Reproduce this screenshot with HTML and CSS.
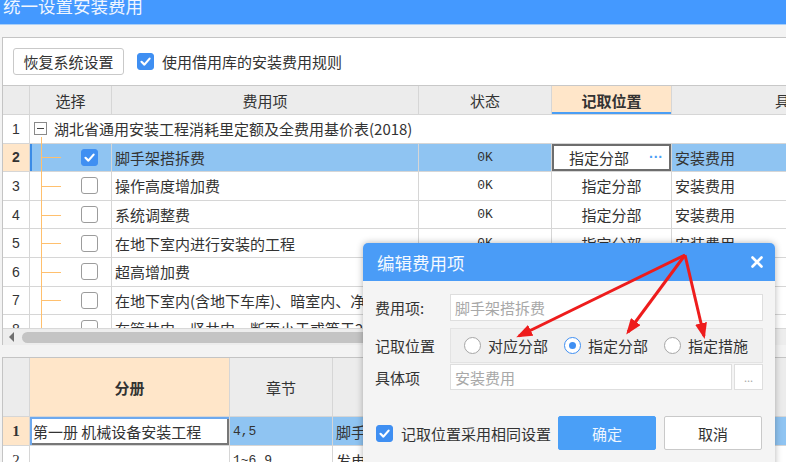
FILE: index.html
```html
<!DOCTYPE html>
<html lang="zh">
<head>
<meta charset="utf-8">
<title>统一设置安装费用</title>
<link rel="stylesheet" href="styles.css">
</head>
<body>
<div class="window">
  <div class="titlebar"><span class="title">统一设置安装费用</span></div>
  <div class="strip"></div>
  <div class="panel">
    <div class="toolbar">
      <button class="btn">恢复系统设置</button>
      <span class="cb cb-on"><svg viewBox="0 0 17 17" width="17" height="17"><path d="M4.5 8.8 L7.4 11.6 L12.6 5.6" fill="none" stroke="#fff" stroke-width="2.2" stroke-linecap="round" stroke-linejoin="round"/></svg></span>
      <span class="cb-text">使用借用库的安装费用规则</span>
    </div>
    <div class="grid-view">
      <div class="grid upper">
        <div class="c hd num"></div>
        <div class="c hd">选择</div>
        <div class="c hd">费用项</div>
        <div class="c hd">状态</div>
        <div class="c hd hd-active">记取位置</div>
        <div class="c hd hd-last">具体项</div>

        <div class="c num">1</div>
        <div class="c root"><span class="tree-box"></span><span>湖北省通用安装工程消耗里定额及全费用基价表(2018)</span></div>

        <div class="c num num-sel">2</div>
        <div class="c sel selrow"><span class="cb cb-on"><svg viewBox="0 0 17 17" width="17" height="17"><path d="M4.5 8.8 L7.4 11.6 L12.6 5.6" fill="none" stroke="#fff" stroke-width="2.2" stroke-linecap="round" stroke-linejoin="round"/></svg></span></div>
        <div class="c name selrow">脚手架搭拆费</div>
        <div class="c stat selrow">0K</div>
        <div class="c pos edit"><span>指定分部</span><span class="dots">···</span></div>
        <div class="c item selrow">安装费用</div>

        <div class="c num">3</div>
        <div class="c sel"><span class="cb"></span></div>
        <div class="c name">操作高度增加费</div>
        <div class="c stat">0K</div>
        <div class="c pos">指定分部</div>
        <div class="c item">安装费用</div>

        <div class="c num">4</div>
        <div class="c sel"><span class="cb"></span></div>
        <div class="c name">系统调整费</div>
        <div class="c stat">0K</div>
        <div class="c pos">指定分部</div>
        <div class="c item">安装费用</div>

        <div class="c num">5</div>
        <div class="c sel"><span class="cb"></span></div>
        <div class="c name">在地下室内进行安装的工程</div>
        <div class="c stat">0K</div>
        <div class="c pos">指定分部</div>
        <div class="c item">安装费用</div>

        <div class="c num">6</div>
        <div class="c sel"><span class="cb"></span></div>
        <div class="c name">超高增加费</div>
        <div class="c stat">0K</div>
        <div class="c pos">指定分部</div>
        <div class="c item">安装费用</div>

        <div class="c num">7</div>
        <div class="c sel"><span class="cb"></span></div>
        <div class="c name">在地下室内(含地下车库)、暗室内、净高小于1.6m楼层</div>
        <div class="c stat">0K</div>
        <div class="c pos">指定分部</div>
        <div class="c item">安装费用</div>

        <div class="c num">8</div>
        <div class="c sel"><span class="cb"></span></div>
        <div class="c name">在管井内、竖井内、断面小于或等于2平方米隧道</div>
        <div class="c stat">0K</div>
        <div class="c pos">指定分部</div>
        <div class="c item">安装费用</div>
      </div>
    </div>
    <div class="hscroll"><span class="arrow-left"></span><span class="thumb"></span></div>
  </div>

  <div class="lower-wrap">
    <div class="grid lower">
      <div class="c hd num"></div>
      <div class="c hd hd-peach">分册</div>
      <div class="c hd">章节</div>
      <div class="c hd">清单</div>

      <div class="c num num-sel lnum">1</div>
      <div class="c book edit-blue">第一册 机械设备安装工程</div>
      <div class="c chap selrow">4,5</div>
      <div class="c desc selrow">脚手架搭拆费</div>

      <div class="c num lnum">2</div>
      <div class="c book"></div>
      <div class="c chap">1~6,9</div>
      <div class="c desc">发电机组安装</div>
    </div>
  </div>
</div>

<div class="dialog">
  <div class="dlg-title">
    <span>编辑费用项</span>
    <svg class="close" viewBox="0 0 12 12" width="12" height="12"><path d="M1.5 1.5 L10.5 10.5 M10.5 1.5 L1.5 10.5" stroke="#fff" stroke-width="2.6" stroke-linecap="round"/></svg>
  </div>
  <div class="dlg-body">
    <div class="frow frow-name">
      <span class="lbl">费用项:</span>
      <div class="input"><span class="ph">脚手架搭拆费</span></div>
    </div>
    <div class="frow frow-pos">
      <span class="lbl">记取位置</span>
      <div class="radio-group">
        <span class="radio-item"><span class="radio"></span>对应分部</span>
        <span class="radio-item"><span class="radio radio-on"></span>指定分部</span>
        <span class="radio-item"><span class="radio"></span>指定措施</span>
      </div>
    </div>
    <div class="frow frow-item">
      <span class="lbl">具体项</span>
      <div class="input input-short"><span class="ph">安装费用</span></div>
      <div class="more">...</div>
    </div>
    <div class="dlg-foot">
      <span class="cb cb-on"><svg viewBox="0 0 17 17" width="17" height="17"><path d="M4.5 8.8 L7.4 11.6 L12.6 5.6" fill="none" stroke="#fff" stroke-width="2.2" stroke-linecap="round" stroke-linejoin="round"/></svg></span>
      <span class="cb-text">记取位置采用相同设置</span>
      <div class="btns">
        <button class="dbtn primary">确定</button>
        <button class="dbtn">取消</button>
      </div>
    </div>
  </div>
</div>

<svg class="arrows" viewBox="0 0 786 462" width="786" height="462">
  <defs>
    <marker id="ah" markerUnits="userSpaceOnUse" markerWidth="16" markerHeight="12" refX="13" refY="6" orient="auto">
      <path d="M0 0 L16 6 L0 12 Z" fill="#ee1c1c"/>
    </marker>
  </defs>
  <g stroke="#ee1c1c" stroke-width="3" fill="none">
    <line x1="685" y1="255" x2="519" y2="336" marker-end="url(#ah)"/>
    <line x1="685" y1="255" x2="628" y2="332" marker-end="url(#ah)"/>
    <line x1="685" y1="255" x2="704" y2="336" marker-end="url(#ah)"/>
  </g>
</svg>
</body>
</html>
```

FILE: styles.css
```css
* { box-sizing: border-box; }

html, body {
  margin: 0;
  padding: 0;
}

body {
  width: 786px;
  height: 462px;
  overflow: hidden;
  position: relative;
  background: #f3f3f3;
  font-family: "Noto Sans CJK SC", "Noto Sans", sans-serif;
  font-size: 15px;
  color: #333;
}

.window {
  width: 786px;
  height: 462px;
  overflow: hidden;
}

.titlebar {
  height: 25px;
  background: #4499ff;
  border-bottom: 1px solid #a9cff8;
  overflow: hidden;
}

.title {
  display: block;
  color: #f0f6ff;
  font-size: 17.5px;
  line-height: 17px;
  margin-top: -3px;
  padding-left: 3px;
  white-space: nowrap;
}

.strip {
  height: 12px;
  background: #f3f3f3;
}

.panel {
  margin-left: 2px;
  border-top: 1px solid #c4c4c4;
  border-left: 1px solid #c4c4c4;
  background: #fff;
}

.toolbar {
  height: 48px;
  display: flex;
  align-items: center;
  padding-left: 10px;
  border-bottom: 1px solid #c8c8c8;
}

.btn {
  height: 27px;
  width: 111px;
  background: #fff;
  border: 1px solid #c9c9c9;
  border-radius: 3px;
  font-family: inherit;
  font-size: 15px;
  color: #333;
  padding: 0;
  margin-right: 13px;
}

.cb {
  width: 17px;
  height: 17px;
  border: 1px solid #9c9c9c;
  border-radius: 3px;
  background: #fff;
  display: inline-flex;
  flex: none;
  overflow: hidden;
}

.cb svg { display: block; margin: -1px; }

.cb-on {
  background: #3f8ff2;
  border-color: #3f8ff2;
}

.cb-text {
  margin-left: 8px;
  white-space: nowrap;
}

/* grids */
.grid-view {
  height: 242px;
  overflow: hidden;
}

.grid {
  display: grid;
}

.upper {
  grid-template-columns: 27px 82px 307px 133px 120px 300px;
  grid-template-rows: 29px;
  grid-auto-rows: 28.6px;
}

.c {
  border-right: 1px solid #d6d6d6;
  border-bottom: 1px solid #d6d6d6;
  display: flex;
  align-items: center;
  white-space: nowrap;
  overflow: hidden;
  background: #fff;
  position: relative;
}

.hd {
  background: #ececec;
  justify-content: center;
  color: #333;
}

.hd-active {
  background: #ffe6c9;
  font-weight: bold;
  box-shadow: inset 0 -2px 0 #4a9ef5;
}

.hd-last {
  justify-content: flex-start;
  padding-left: 103px;
}

.num {
  justify-content: center;
  font-family: "Liberation Sans", sans-serif;
  font-size: 14px;
}

.num.hd { background: #ececec; }

.num-sel {
  background: #ffe6c9;
  font-weight: bold;
}

.root {
  grid-column: 2 / -1;
  padding-left: 4px;
  overflow: visible;
}

.tree-box {
  width: 13px;
  height: 13px;
  border: 1px solid #8a8a8a;
  margin-right: 7px;
  position: relative;
  flex: none;
}

.tree-box::after {
  content: "";
  position: absolute;
  left: 2px;
  right: 2px;
  top: 5px;
  height: 1px;
  background: #444;
}

.root::before {
  content: "";
  position: absolute;
  left: 11px;
  top: 22px;
  bottom: -1px;
  width: 1px;
  background: #ffc06e;
}

.sel {
  padding-left: 51px;
  overflow: visible;
}

.sel::before {
  content: "";
  position: absolute;
  left: 11px;
  top: 0;
  bottom: -1px;
  width: 1px;
  background: #ffc06e;
}

.sel::after {
  content: "";
  position: absolute;
  left: 11px;
  width: 20px;
  top: 50%;
  height: 1px;
  background: #ffc06e;
}

.name { padding-left: 3px; }

.stat {
  justify-content: center;
  font-family: "Liberation Mono", monospace;
  font-size: 13px;
}

.pos { justify-content: center; }

.item { padding-left: 3px; }

.selrow { background: #8fc4f2; }

.sel.selrow { box-shadow: inset 2px 0 0 #3b8be6; }

.edit {
  background: #fff;
  box-shadow: inset 0 0 0 2px #6d6d6d;
  justify-content: space-between;
  padding: 0 8px 0 17px;
}

.dots {
  color: #4a9ef5;
  font-family: "Liberation Sans", sans-serif;
  font-size: 14px;
  font-weight: bold;
  letter-spacing: 0;
}

.hscroll {
  height: 17px;
  background: #ededed;
  border-top: 1px solid #d8d8d8;
  display: flex;
  align-items: center;
  padding-left: 6px;
}

.arrow-left {
  width: 0;
  height: 0;
  border-top: 5px solid transparent;
  border-bottom: 5px solid transparent;
  border-right: 5px solid #6f6f6f;
  margin-right: 8px;
}

.thumb {
  height: 11px;
  width: 740px;
  border-radius: 6px;
  background: #c4c4c4;
}

.lower-wrap {
  margin-top: 12px;
  margin-left: 2px;
  border-top: 1px solid #c4c4c4;
  border-left: 1px solid #c4c4c4;
  background: #fff;
}

.lower {
  grid-template-columns: 27px 200px 103px 460px;
  grid-template-rows: 59px 29px 29px;
}

.hd-peach {
  background: #ffe6c9;
  font-weight: bold;
}

.lnum {
  font-family: "Liberation Serif", serif;
  font-size: 15px;
}

.book { padding-left: 3px; }

.edit-blue {
  box-shadow: inset 2px 2px 0 #6ea9ee, inset -2px -2px 0 #777;
}

.chap {
  padding-left: 3px;
  font-family: "Liberation Mono", monospace;
  font-size: 13px;
}

.desc { padding-left: 3px; }

/* dialog */
.dialog {
  position: absolute;
  left: 363px;
  top: 243px;
  width: 412px;
  height: 240px;
  background: #f4f4f4;
  border-radius: 5px 5px 0 0;
  box-shadow: 0 0 7px rgba(0, 0, 0, 0.3);
  overflow: hidden;
}

.dlg-title {
  height: 38px;
  background: #4a9cf7;
  color: #f4f9ff;
  font-size: 17.5px;
  display: flex;
  align-items: center;
  justify-content: space-between;
  padding: 0 12px 0 14px;
}

.dlg-body {
  padding: 13px 12px 0 12px;
}

.frow {
  display: flex;
  align-items: center;
}

.frow-name { height: 27px; }
.frow-pos { height: 35px; margin-top: 7px; }
.frow-item { height: 26px; margin-top: 1px; }

.lbl {
  width: 75px;
  flex: none;
  white-space: nowrap;
}

.input {
  height: 27px;
  width: 313px;
  background: #fff;
  border: 1px solid #dedede;
  display: flex;
  align-items: center;
  padding-left: 4px;
}

.ph { color: #a8a8a8; }

.radio-group {
  width: 313px;
  height: 35px;
  background: #f0f0f0;
  border: 1px solid #e3e3e3;
  display: flex;
  align-items: center;
  padding-left: 13px;
  gap: 16px;
}

.radio-item {
  display: inline-flex;
  align-items: center;
  white-space: nowrap;
}

.radio {
  width: 17px;
  height: 17px;
  border-radius: 50%;
  border: 1px solid #a6a6a6;
  background: #fff;
  margin-right: 7px;
  position: relative;
}

.radio-on { border-color: #3f8ff2; }

.radio-on::after {
  content: "";
  position: absolute;
  left: 4px;
  top: 4px;
  width: 7px;
  height: 7px;
  border-radius: 50%;
  background: #3f8ff2;
}

.input-short {
  height: 26px;
  width: 282px;
}

.more {
  width: 29px;
  height: 26px;
  margin-left: 2px;
  background: #fff;
  border: 1px solid #dedede;
  color: #aaa;
  font-size: 11px;
  display: flex;
  align-items: center;
  justify-content: center;
}

.dlg-foot {
  margin-top: 26px;
  height: 34px;
  display: flex;
  align-items: center;
  padding-left: 1px;
}

.btns {
  margin-left: auto;
  display: flex;
  gap: 8px;
  margin-right: 1px;
}

.dbtn {
  width: 98px;
  height: 34px;
  border: 1px solid #c9c9c9;
  background: #fff;
  border-radius: 2px;
  font-family: inherit;
  font-size: 15px;
  color: #333;
  padding: 0;
}

.dbtn.primary {
  background: #4a9ff7;
  border-color: #4a9ff7;
  color: #eef6ff;
}

.arrows {
  position: absolute;
  left: 0;
  top: 0;
  pointer-events: none;
}
```
